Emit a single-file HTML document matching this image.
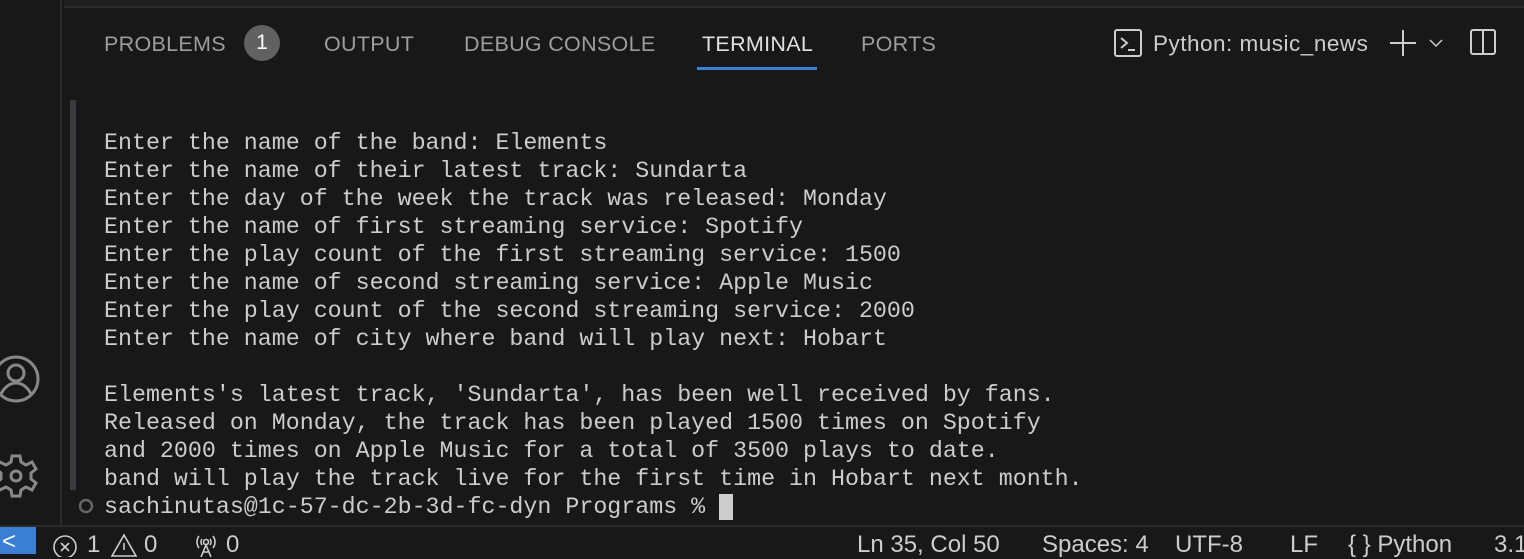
<!DOCTYPE html>
<html><head><meta charset="utf-8"><style>
*{margin:0;padding:0;box-sizing:border-box}
body{width:1524px;height:554px;background:#181818;overflow:hidden;position:relative;font-family:"Liberation Sans",sans-serif;color:#ccc}
.abar{position:absolute;left:0;top:0;width:62px;height:526px;background:#181818;border-right:2px solid #2b2b2b}
.topb{position:absolute;left:64px;top:0;width:1460px;height:8px;background:#1f1f1f;border-bottom:2px solid #2b2b2b}
.tab{position:absolute;top:32px;font-size:21.5px;color:#9d9d9d;letter-spacing:0.3px}
.badge{position:absolute;left:244px;top:25px;width:36px;height:36px;border-radius:18px;background:#616161;color:#fff;font-size:21px;text-align:center;line-height:36px}
.uline{position:absolute;left:697px;top:67px;width:120px;height:3px;background:#3a7fd4}
.term{position:absolute;left:104px;top:129px;font-family:"Liberation Mono",monospace;font-size:23.3px;line-height:28px;color:#cccccc;white-space:pre}
.sbar{position:absolute;left:70px;top:100px;width:6px;height:390px;background:#3a3a3f}
.status{position:absolute;left:0;top:525px;width:1524px;height:29px;background:#181818;border-top:2px solid #2b2b2b}
.st{position:absolute;top:531px;font-size:24px;color:#ccc;white-space:nowrap}
</style></head><body>
<div class="abar"></div>
<div class="topb"></div>
<div class="tab" style="left:104px">PROBLEMS</div>
<div class="badge">1</div>
<div class="tab" style="left:324px">OUTPUT</div>
<div class="tab" style="left:464px">DEBUG CONSOLE</div>
<div class="tab" style="left:702px;color:#e0e0e0">TERMINAL</div>
<div class="tab" style="left:861px">PORTS</div>
<div class="uline"></div>
<svg style="position:absolute;left:1114px;top:29px" width="28" height="28" viewBox="0 0 28 28" fill="none" stroke="#ccc" stroke-width="2"><rect x="1" y="1" width="26" height="26" rx="2"/><path d="M7 9l6 5-6 5M14 21h7"/></svg>
<div class="tab" style="left:1153px;color:#ccc;font-size:22.5px;top:31px;letter-spacing:0.5px">Python: music_news</div>
<svg style="position:absolute;left:1388px;top:28px" width="60" height="30" fill="none" stroke="#ccc" stroke-width="2"><path d="M15 2v26M2 15h26"/><path d="M42 12l6 6 6-6" stroke-width="1.5"/></svg>
<svg style="position:absolute;left:1469px;top:28px" width="28" height="28" fill="none" stroke="#ccc" stroke-width="2"><rect x="2" y="2" width="24" height="24" rx="2"/><path d="M14 2v24"/></svg>
<div class="sbar"></div>
<div class="term">Enter the name of the band: Elements
Enter the name of their latest track: Sundarta
Enter the day of the week the track was released: Monday
Enter the name of first streaming service: Spotify
Enter the play count of the first streaming service: 1500
Enter the name of second streaming service: Apple Music
Enter the play count of the second streaming service: 2000
Enter the name of city where band will play next: Hobart

Elements's latest track, 'Sundarta', has been well received by fans.
Released on Monday, the track has been played 1500 times on Spotify
and 2000 times on Apple Music for a total of 3500 plays to date.
band will play the track live for the first time in Hobart next month.
sachinutas@1c-57-dc-2b-3d-fc-dyn Programs % <span style="background:#ccc">&nbsp;</span></div>
<svg style="position:absolute;left:78px;top:498px" width="16" height="16" fill="none" stroke="#666" stroke-width="2.5"><circle cx="8" cy="8" r="6"/></svg>
<svg style="position:absolute;left:-4px;top:354px" width="46" height="50" fill="none" stroke="#888" stroke-width="3"><circle cx="20" cy="25" r="22"/><circle cx="20" cy="19" r="8"/><path d="M5 40c4-8 10-11 15-11s11 3 15 11"/></svg>
<svg style="position:absolute;left:-4px;top:450px" width="46" height="52" fill="none" stroke="#888" stroke-width="3"><circle cx="20" cy="26" r="5"/><path d="M16 6h8l1 6 5 3 6-3 4 7-5 4v6l5 4-4 7-6-3-5 3-1 6h-8l-1-6-5-3-6 3-4-7 5-4v-6l-5-4 4-7 6 3 5-3z"/></svg>
<div class="status"></div>
<div style="position:absolute;left:0;top:527px;width:36px;height:27px;background:#3a7fd4"></div>
<div class="st" style="left:2px;color:#fff;top:528px">&lt;</div>
<svg style="position:absolute;left:53px;top:535px" width="26" height="22" fill="none" stroke="#ccc" stroke-width="1.6"><circle cx="12" cy="12" r="11"/><path d="M8 8l8 8M16 8l-8 8"/></svg>
<div class="st" style="left:87px">1</div>
<svg style="position:absolute;left:110px;top:533px" width="28" height="24" fill="none" stroke="#ccc" stroke-width="1.6"><path d="M14 2L26 23H2z M14 10v7"/></svg>
<div class="st" style="left:144px">0</div>
<svg style="position:absolute;left:193px;top:533px" width="26" height="24" fill="none" stroke="#ccc" stroke-width="1.6"><circle cx="13" cy="9" r="2.5"/><path d="M6 3a10 10 0 0 0 0 12M20 3a10 10 0 0 1 0 12M9 6a5 5 0 0 0 0 6M17 6a5 5 0 0 1 0 6M13 12l-5 12M13 12l5 12M10 19h6"/></svg>
<div class="st" style="left:226px">0</div>
<div class="st" style="left:857px">Ln 35, Col 50</div>
<div class="st" style="left:1042px">Spaces: 4</div>
<div class="st" style="left:1175px">UTF-8</div>
<div class="st" style="left:1290px">LF</div>
<div class="st" style="left:1348px">{ } Python</div>
<div class="st" style="left:1494px">3.1</div>
</body></html>
